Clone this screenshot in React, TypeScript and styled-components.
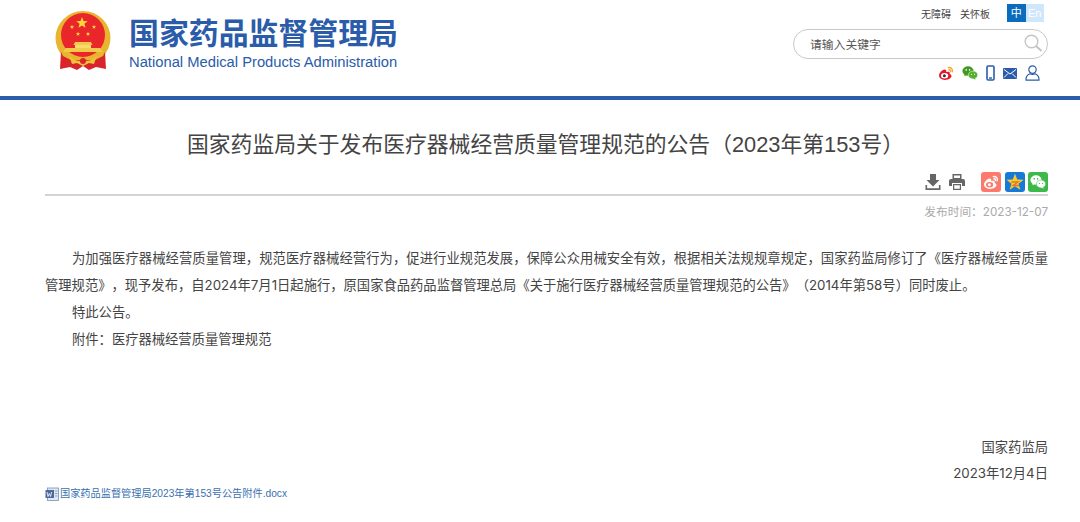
import React from "react";
import styled, { createGlobalStyle } from "styled-components";

const bodyFont = `Inter, "Noto Sans CJK SC", sans-serif`;

const Global = createGlobalStyle`
  html, body {
    margin: 0;
    padding: 0;
    background: #fff;
    font-family: "Liberation Sans", "Noto Sans CJK SC", sans-serif;
    text-spacing-trim: space-all;
  }
`;

const Page = styled.div`
  width: 1080px;
  height: 522px;
  overflow: hidden;
`;

const Header = styled.header`
  height: 96px;
  border-bottom: 4px solid #2a5caa;
  padding: 0 32px 0 55px;
  display: flex;
  justify-content: space-between;
`;

const Brand = styled.div`
  display: flex;
  align-items: flex-start;
  padding-top: 11px;
  gap: 18px;
`;

const BrandText = styled.div`
  display: flex;
  flex-direction: column;
  color: #2a5caa;
  padding-top: 6px;
`;

const BrandName = styled.div`
  font-size: 29.9px;
  line-height: 34px;
  font-weight: 700;
  white-space: nowrap;
`;

const BrandEnglish = styled.div`
  font-size: 14.75px;
  line-height: 18px;
  margin-top: 2px;
  white-space: nowrap;
`;

const Tools = styled.div`
  width: 255px;
  display: flex;
  flex-direction: column;
  align-items: stretch;
`;

const TopLinks = styled.div`
  display: flex;
  justify-content: flex-end;
  align-items: center;
  height: 18px;
  margin-top: 4px;
  padding-right: 4px;
  font-size: 10px;
  color: #444;
`;

const TopLink = styled.span`
  margin-right: 9px;
`;

const LangGroup = styled.div`
  display: flex;
  margin-left: 8px;
`;

const Lang = styled.span<{ $active?: boolean }>`
  width: 18.5px;
  height: 18px;
  line-height: 18px;
  text-align: center;
  font-size: 11px;
  color: #fff;
  background: ${(p) => (p.$active ? "#0a6cbd" : "#cfe6fb")};
`;

const SearchBox = styled.div`
  height: 30px;
  margin-top: 7px;
  box-sizing: border-box;
  border: 1px solid #c8c8c8;
  border-radius: 15px;
  padding: 0 4px 2px 16px;
  display: flex;
  align-items: center;
  justify-content: space-between;
  font-size: 11.8px;
  color: #555;
`;

const SocialRow = styled.div`
  display: flex;
  justify-content: flex-end;
  align-items: center;
  gap: 8px;
  height: 16px;
  margin-top: 6px;
  padding-right: 8px;
`;

const Article = styled.main`
  padding: 0 32px 0 45px;
`;

const Title = styled.h1`
  margin: 31px 0 0;
  font-size: 21.8px;
  line-height: 28px;
  font-weight: 400;
  color: #444;
  text-align: center;
  white-space: nowrap;
  padding-right: 2px;
`;

const ShareBar = styled.div`
  display: flex;
  justify-content: flex-end;
  align-items: center;
  height: 22px;
  margin-top: 12px;
  padding-bottom: 1px;
  border-bottom: 2px solid #d4d4d4;
`;

const Actions = styled.div`
  display: flex;
  align-items: center;
  gap: 8px;
  margin-right: 13px;
`;

const ShareTile = styled.span<{ $bg: string }>`
  width: 20px;
  height: 20px;
  border-radius: 3px;
  background: ${(p) => p.$bg};
  margin-left: 3.5px;
  display: flex;
  align-items: center;
  justify-content: center;
`;

const DateLine = styled.div`
  text-align: right;
  font-family: ${bodyFont};
  font-size: 11.7px;
  line-height: 16px;
  margin-top: 8px;
  color: #aaa;
`;

const Body = styled.div`
  margin-top: 25px;
  font-family: ${bodyFont};
  font-size: 13.3px;
  line-height: 27px;
  color: #444;
`;

const Para = styled.p`
  margin: 0;
  text-indent: 27px;
  text-align: justify;
`;

const Signature = styled.div`
  margin-top: 81px;
  text-align: right;
  font-family: ${bodyFont};
  font-size: 13.3px;
  line-height: 26px;
  color: #444;
`;

const Attachment = styled.a`
  display: flex;
  align-items: center;
  gap: 1px;
  margin-top: 0;
  font-size: 10.2px;
  line-height: 16px;
  color: #3a6fb0;
  white-space: nowrap;
`;

const Star = ({ cx, cy, r, fill = "#ffd83a" }: { cx: number; cy: number; r: number; fill?: string }) => {
  const pts = Array.from({ length: 10 }, (_, i) => {
    const a = -Math.PI / 2 + (i * Math.PI) / 5;
    const d = i % 2 ? r * 0.42 : r;
    return `${(cx + d * Math.cos(a)).toFixed(2)},${(cy + d * Math.sin(a)).toFixed(2)}`;
  }).join(" ");
  return <polygon points={pts} fill={fill} />;
};

const Emblem = () => (
  <svg width="56" height="60" viewBox="0 0 56 60">
    <ellipse cx="28" cy="27" rx="27.500" ry="27" fill="#e9b52f" />
    <circle cx="28" cy="24" r="22" fill="#e9272b" />
    <Star cx={27} cy={12} r={6} />
    <Star cx={17} cy={16} r={2.300} />
    <Star cx={39} cy={16} r={2.300} />
    <Star cx={23} cy={23} r={2.300} />
    <Star cx={33} cy={23} r={2.300} />
    <path d="M20 31h16l1.500 3h-19z" fill="#f3c94c" />
    <rect x="20" y="34" width="16" height="3" fill="#f8d96a" />
    <path d="M11 37h34l3 4H8z" fill="#f3c94c" />
    <path d="M8 45 L6 41 L5 58 L15 56 L22 59 L28 55 L34 59 L41 56 L51 58 L50 41 L48 45 L40 49 H16z" fill="#d9242a" />
    <path d="M14 44c3 5 8 6 14 6s11-1 14-6l-3 9-5-1-6 3-6-3-5 1z" fill="#f0c33f" />
    <circle cx="28" cy="50" r="3" fill="#d9242a" />
  </svg>
);

const Magnifier = () => (
  <svg width="20" height="20" viewBox="0 0 20 20" fill="none" stroke="#c4c4c4">
    <circle cx="8.500" cy="8.500" r="6.300" strokeWidth="1.400" />
    <path d="M13 13l5.500 5" strokeWidth="2" />
  </svg>
);

const WeiboGlyph = ({ size = 16, body = "#e6162d", eye = "#fff", pupil = "#333", arc = "#f5a623" }) => (
  <svg width={size} height={size} viewBox="0 0 16 16" fill="none">
    <path d="M1 10.500C1 8 4.500 4.600 6.800 4.600c1.600 0 1.700 1.400 1.300 2.500 2-.7 3.700-.6 3.700.9 0 .4-.1.6-.3.9 1.200.4 2 1 2 2.200 0 2-3 3.900-6.600 3.900C3.400 14.500 1 13 1 10.500z" fill={body} />
    <ellipse cx="6.600" cy="10.700" rx="3.600" ry="2.700" fill={eye} />
    <circle cx="6.400" cy="10.800" r="1.500" fill={pupil} />
    <path d="M10.300 2.600c2.600-.6 4.700 1.600 4 4.200M10.800 4.800c1.200-.2 2.100.7 1.800 1.900" stroke={arc} strokeWidth="1.300" strokeLinecap="round" />
  </svg>
);

const WechatGlyph = ({ size = 16, back = "#3f9b1e", front = "#55b02a", eye = "#fff", ring = "#fff" }) => (
  <svg width={size} height={size} viewBox="0 0 16 16">
    <ellipse cx="6" cy="6" rx="5.600" ry="4.700" fill={back} />
    <path d="M3 9l-.6 2.300L5.200 10z" fill={back} />
    <ellipse cx="11" cy="10" rx="4.700" ry="3.900" fill={front} stroke={ring} strokeWidth="0.500" />
    <path d="M13 13l.6 1.800L11 13.600z" fill={front} />
    <circle cx="4.200" cy="4.900" r=".8" fill={eye} />
    <circle cx="7.600" cy="4.900" r=".8" fill={eye} />
    <circle cx="9.500" cy="9.300" r=".6" fill={eye} />
    <circle cx="12.500" cy="9.300" r=".6" fill={eye} />
  </svg>
);

const Phone = () => (
  <svg width="9" height="16" viewBox="0 0 9 16" fill="none">
    <rect x="1" y="1" width="7" height="14" rx="1.200" stroke="#2a5caa" strokeWidth="1.600" />
    <path d="M3 13h3" stroke="#2a5caa" strokeWidth="1.400" />
  </svg>
);

const Mail = () => (
  <svg width="14" height="11" viewBox="0 0 14 11">
    <rect width="14" height="11" rx="1" fill="#2a5caa" />
    <path d="M1 1.500l6 4.500 6-4.500M1 9.500l4-4M13 9.500l-4-4" stroke="#fff" strokeWidth="1" fill="none" />
  </svg>
);

const User = () => (
  <svg width="15" height="16" viewBox="0 0 15 16" fill="none" stroke="#2a5caa" strokeWidth="1.200">
    <circle cx="7.500" cy="4.600" r="3.700" />
    <path d="M1 15.200c-.3-3.800 2-5.600 3.800-6.400 1.700.9 3.700.9 5.400 0 1.800.8 4.100 2.600 3.800 6.400z" strokeLinejoin="round" />
  </svg>
);

const Download = () => (
  <svg width="16" height="16" viewBox="0 0 16 16" fill="#666">
    <path d="M5 0h6v6h3.500L8 12.500 1.500 6H5z" />
    <path d="M.5 11h1.600v3.300h11.800V11h1.600v5H.5z" />
  </svg>
);

const Printer = () => (
  <svg width="16" height="16" viewBox="0 0 16 16" fill="#666">
    <path d="M3.500 0h9v5h-9zM5 1.500v2.500h6V1.500z" fillRule="evenodd" />
    <path d="M2 5h12a2 2 0 0 1 2 2v5h-3V9H3v3H0V7a2 2 0 0 1 2-2z" />
    <path d="M4 10h8v6H4zM5.200 11.200v3.600h5.600v-3.600z" fillRule="evenodd" />
  </svg>
);

const QzoneGlyph = () => (
  <svg width="18" height="18" viewBox="0 0 18 18">
    <Star cx={9} cy={9.500} r={9} fill="#ffc928" />
    <path d="M5.500 9h6.500L7 12.500h6" stroke="#e2772a" strokeWidth="1.400" fill="none" />
  </svg>
);

const DocIcon = () => (
  <svg width="14" height="14" viewBox="0 0 14 14">
    <rect x="2.500" y="1" width="11" height="12.500" fill="#dfe7f3" stroke="#7c8fb0" strokeWidth=".8" />
    <rect x="0.500" y="3" width="8.500" height="8" fill="#4a6a9e" />
    <path d="M2 5l1 4.500 1.300-3 1.300 3 1-4.500" stroke="#fff" strokeWidth=".8" fill="none" />
    <path d="M10 4h2.500M10 6.500h2.500M10 9h2.500" stroke="#7c8fb0" strokeWidth=".8" />
  </svg>
);

export default function App() {
  return (
    <Page>
      <Global />
      <Header>
        <Brand>
          <Emblem />
          <BrandText>
            <BrandName>国家药品监督管理局</BrandName>
            <BrandEnglish>National Medical Products Administration</BrandEnglish>
          </BrandText>
        </Brand>
        <Tools>
          <TopLinks>
            <TopLink>无障碍</TopLink>
            <TopLink>关怀板</TopLink>
            <LangGroup>
              <Lang $active>中</Lang>
              <Lang>En</Lang>
            </LangGroup>
          </TopLinks>
          <SearchBox>
            <span>请输入关键字</span>
            <Magnifier />
          </SearchBox>
          <SocialRow>
            <WeiboGlyph />
            <WechatGlyph />
            <Phone />
            <Mail />
            <User />
          </SocialRow>
        </Tools>
      </Header>
      <Article>
        <Title>国家药监局关于发布医疗器械经营质量管理规范的公告（2023年第153号）</Title>
        <ShareBar>
          <Actions>
            <Download />
            <Printer />
          </Actions>
          <ShareTile $bg="#fb7a6c">
            <WeiboGlyph body="#fff" eye="#fb7a6c" pupil="#fff" arc="#fff" />
          </ShareTile>
          <ShareTile $bg="#1479d7">
            <QzoneGlyph />
          </ShareTile>
          <ShareTile $bg="#3cb94a">
            <WechatGlyph back="#fff" front="#fff" eye="#3cb94a" ring="#3cb94a" />
          </ShareTile>
        </ShareBar>
        <DateLine>发布时间：2023-12-07</DateLine>
        <Body>
          <Para>
            为加强医疗器械经营质量管理，规范医疗器械经营行为，促进行业规范发展，保障公众用械安全有效，根据相关法规规章规定，国家药监局修订了《医疗器械经营质量管理规范》，现予发布，自2024年7月1日起施行，原国家食品药品监督管理总局《关于施行医疗器械经营质量管理规范的公告》（2014年第58号）同时废止。
          </Para>
          <Para>特此公告。</Para>
          <Para>附件：医疗器械经营质量管理规范</Para>
        </Body>
        <Signature>
          <div>国家药监局</div>
          <div>2023年12月4日</div>
        </Signature>
        <Attachment>
          <DocIcon />
          国家药品监督管理局2023年第153号公告附件.docx
        </Attachment>
      </Article>
    </Page>
  );
}
